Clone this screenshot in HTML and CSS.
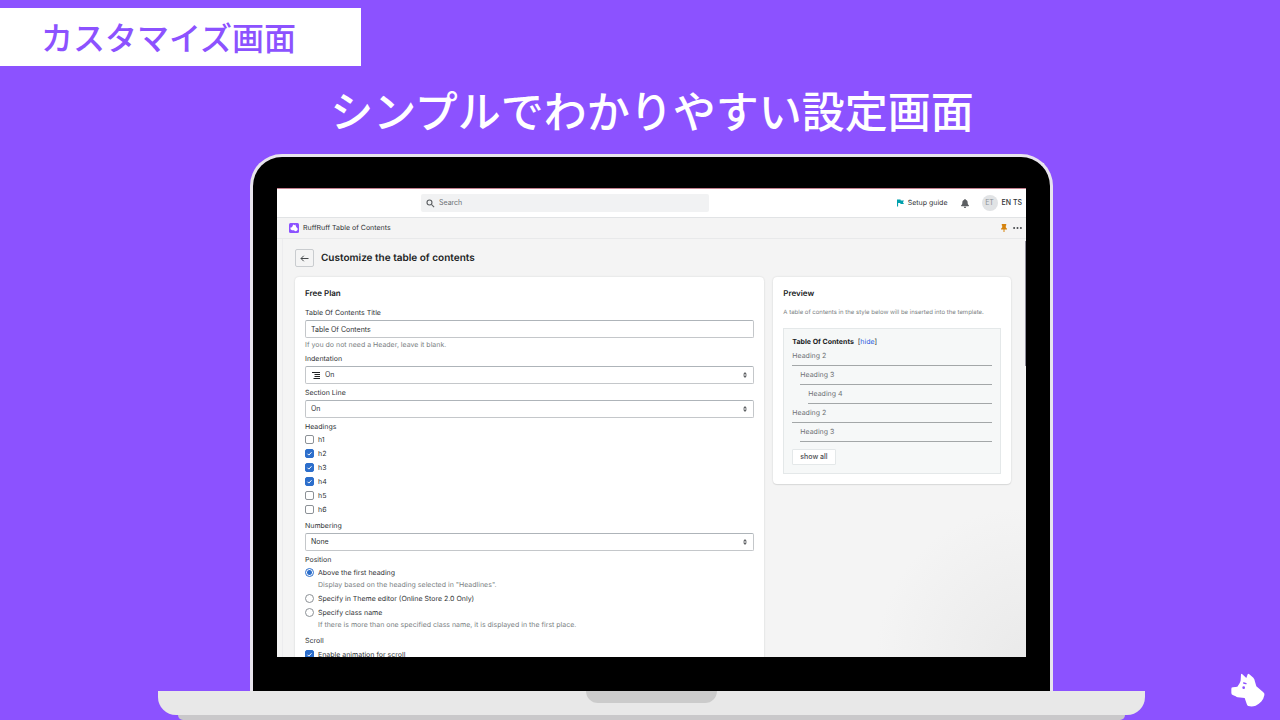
FILE: index.html
```html
<!DOCTYPE html>
<html lang="ja">
<head>
<meta charset="utf-8">
<title>カスタマイズ画面</title>
<link rel="stylesheet" href="styles.css">
</head>
<body>
<div class="page">
  <p class="tag">カスタマイズ画面</p>
  <h1 class="headline">シンプルでわかりやすい設定画面</h1>

  <div class="laptop">
    <div class="lid">
      <div class="screen" lang="en">
        <header class="topbar">
          <div class="search">
            <svg class="search-icon" viewBox="0 0 16 16" aria-hidden="true"><circle cx="6.2" cy="6.2" r="4.4"/><path d="M9.6 9.6l4.8 4.8"/></svg>
            <input class="search-input" type="search" placeholder="Search" aria-label="Search">
          </div>
          <div class="topbar-actions">
            <a class="setup" href="#"><svg class="flag" viewBox="0 0 16 16" aria-hidden="true"><path d="M0 0h8l.6 2H16l-2.500 4 2.500 4H8l-.6-2H2.500v8H0z"/></svg>Setup guide</a>
            <button class="icon-button" type="button" aria-label="Notifications"><svg class="bell" viewBox="0 0 16 18" aria-hidden="true"><path d="M8 0c1 0 1.500.8 1.500 1.700C12 2.500 13.300 4.600 13.300 7.200c0 3 .7 4.300 2.300 5.400.6.500.4 1.700-.6 1.700H1c-1 0-1.200-1.200-.6-1.700C2 11.500 2.700 10.200 2.700 7.200c0-2.600 1.300-4.700 3.800-5.500C6.500.8 7 0 8 0zM5.600 15.400h4.800C10.200 17 9.200 18 8 18s-2.200-1-2.400-2.600z"/></svg></button>
            <button class="account" type="button"><span class="avatar">ET</span>EN TS</button>
          </div>
        </header>

        <div class="appbar">
          <svg class="app-logo" viewBox="0 0 20 20" aria-hidden="true"><rect width="20" height="20" rx="3" fill="#8c52ff"/><path d="M8.500 3l2.500 1.700L12.500 3l2 5 3 3.500c0 3-2 5-5 5.200L9.800 14.500H6l-3-2V9l3-.7z" fill="#fff"/></svg>
          <span class="app-name">RuffRuff Table of Contents</span>
          <button class="icon-button" type="button" aria-label="Unpin"><svg class="pin" viewBox="0 0 12 16" aria-hidden="true"><path d="M1.500 0h9v2.500L9.600 3.500v3.500L12 9.500V11H7v5H5v-5H0V9.500L2.400 7V3.500l-.9-1z"/></svg></button>
          <button class="icon-button" type="button" aria-label="More"><svg class="dots" viewBox="0 0 18 4" aria-hidden="true"><circle cx="2.200" cy="2" r="2"/><circle cx="9" cy="2" r="2"/><circle cx="15.800" cy="2" r="2"/></svg></button>
        </div>

        <main class="content">
          <div class="page-header">
            <button class="back" type="button" aria-label="Back"><svg class="arrow" viewBox="0 0 18 14" aria-hidden="true"><path d="M17 7H2M7.500 1.500L2 7l5.500 5.500"/></svg></button>
            <h2 class="page-title">Customize the table of contents</h2>
          </div>

          <div class="columns">
            <form class="card settings">
              <h3 class="card-title">Free Plan</h3>

              <div class="field">
                <label class="label" for="toc-title">Table Of Contents Title</label>
                <div class="control"><input class="control-input" id="toc-title" type="text" value="Table Of Contents"></div>
                <p class="help">If you do not need a Header, leave it blank.</p>
              </div>

              <div class="field">
                <label class="label" for="indent">Indentation</label>
                <div class="control">
                  <svg class="indent-icon" viewBox="0 0 16 14" aria-hidden="true"><path d="M0 1h16M5 5h11M5 9h11M3 13h13"/></svg>
                  <select class="control-input" id="indent"><option>On</option><option>Off</option></select>
                  <svg class="updown" viewBox="0 0 8 12" aria-hidden="true"><path d="M4 0l4 5H0zM4 12L0 7h8z"/></svg>
                </div>
              </div>

              <div class="field">
                <label class="label" for="line">Section Line</label>
                <div class="control">
                  <select class="control-input" id="line"><option>On</option><option>Off</option></select>
                  <svg class="updown" viewBox="0 0 8 12" aria-hidden="true"><path d="M4 0l4 5H0zM4 12L0 7h8z"/></svg>
                </div>
              </div>

              <fieldset class="field">
                <legend class="label">Headings</legend>
                <div class="choices">
                  <label class="choice"><input class="tick" type="checkbox">h1</label>
                  <label class="choice"><input class="tick" type="checkbox" checked>h2</label>
                  <label class="choice"><input class="tick" type="checkbox" checked>h3</label>
                  <label class="choice"><input class="tick" type="checkbox" checked>h4</label>
                  <label class="choice"><input class="tick" type="checkbox">h5</label>
                  <label class="choice"><input class="tick" type="checkbox">h6</label>
                </div>
              </fieldset>

              <div class="field">
                <label class="label" for="numbering">Numbering</label>
                <div class="control">
                  <select class="control-input" id="numbering"><option>None</option><option>Decimal</option></select>
                  <svg class="updown" viewBox="0 0 8 12" aria-hidden="true"><path d="M4 0l4 5H0zM4 12L0 7h8z"/></svg>
                </div>
              </div>

              <fieldset class="field">
                <legend class="label">Position</legend>
                <div class="choices">
                  <label class="choice"><input class="dot" type="radio" name="position" checked>Above the first heading</label>
                  <p class="choice-help">Display based on the heading selected in "Headlines".</p>
                  <label class="choice"><input class="dot" type="radio" name="position">Specify in Theme editor (Online Store 2.0 Only)</label>
                  <label class="choice"><input class="dot" type="radio" name="position">Specify class name</label>
                  <p class="choice-help">If there is more than one specified class name, it is displayed in the first place.</p>
                </div>
              </fieldset>

              <fieldset class="field">
                <legend class="label">Scroll</legend>
                <div class="choices choices-loose">
                  <label class="choice"><input class="tick" type="checkbox" checked>Enable animation for scroll</label>
                </div>
              </fieldset>
            </form>

            <section class="card preview">
              <h3 class="card-title">Preview</h3>
              <p class="preview-note">A table of contents in the style below will be inserted into the template.</p>
              <nav class="toc">
                <p class="toc-title"><strong>Table Of Contents</strong> <span class="toc-toggle">[<a href="#">hide</a>]</span></p>
                <ul class="toc-list">
                  <li class="toc-item">Heading 2</li>
                  <li class="toc-item level-3">Heading 3</li>
                  <li class="toc-item level-4">Heading 4</li>
                  <li class="toc-item">Heading 2</li>
                  <li class="toc-item level-3">Heading 3</li>
                </ul>
                <button class="show-all" type="button">show all</button>
              </nav>
            </section>
          </div>
        </main>
      </div>
    </div>
    <div class="base"><div class="notch"></div></div>
    <div class="foot"></div>
  </div>

  <svg class="dog" viewBox="92 39 102 102" aria-hidden="true">
    <path fill="#fff" d="M122 43q2-3 4 0l12 11 4-11q2-3 5 0l12 10q4 4 5 12l4 14 21 18q5 4 3 9c-3 15-12 25-26 31-8 3-15 3-22 1q-4-2-5-7l-6-17-21-2q-3 0-6-3l-9-4q-4-2-4-7v-12q0-4 5-4l13-2 6-9q3-5 4-10z"/>
    <path d="M130 69l7 2" fill="none" stroke="#8c52ff" stroke-width="4" stroke-linecap="round"/>
    <circle cx="130" cy="83" r="4" fill="#8c52ff"/>
  </svg>
</div>
</body>
</html>
```

FILE: styles.css
```css
* { box-sizing: border-box; }

body, h1, h2, h3, p, ul, fieldset { margin: 0; padding: 0; }

button, input, select {
  margin: 0;
  padding: 0;
  border: 0;
  background: none;
  color: inherit;
  font: inherit;
}

svg { display: block; flex: none; }

.page {
  position: relative;
  display: flex;
  flex-direction: column;
  height: 100vh;
  padding-top: 8px;
  overflow: hidden;
  background: #8c52ff;
  font-family: "Noto Sans CJK JP", sans-serif;
}

.tag {
  align-self: flex-start;
  padding: 0 65px 2px 41px;
  background: #fff;
  color: #8c52ff;
  font-size: 32px;
  font-weight: 500;
  line-height: 56px;
}

.headline {
  padding: 11px 0 13px 24px;
  color: #fff;
  font-size: 43px;
  font-weight: 500;
  line-height: 64px;
  text-align: center;
}

/* Laptop frame */
.laptop {
  display: flex;
  flex: 1;
  flex-direction: column;
  min-height: 0;
  padding: 0 135px 0 158px;
}

.lid {
  display: flex;
  flex: 1;
  min-height: 0;
  margin: 0 92px;
  padding: 31px 24px 34px;
  border: 3px solid #e8e4ee;
  border-bottom: 0;
  border-radius: 32px 32px 0 0;
  background: #000;
}

.base {
  height: 24px;
  border-radius: 0 0 18px 18px;
  background: #e8e8e8;
}

.notch {
  width: 131px;
  height: 12px;
  margin: 0 auto;
  border-radius: 0 0 12px 12px;
  background: #cbcbcb;
}

.foot {
  height: 5px;
  margin: 0 20px;
  border-radius: 0 0 8px 8px;
  background: #c9c8ca;
}

.dog {
  position: absolute;
  right: 15px;
  bottom: 13px;
  width: 34px;
  height: 34px;
}

/* Application screen */
.screen {
  display: flex;
  flex: 1;
  flex-direction: column;
  min-width: 0;
  overflow: hidden;
  border-top: 1px solid #c4808f;
  background: #f4f4f4;
  color: #303335;
  font-family: Inter, sans-serif;
  font-size: 7px;
  line-height: 10px;
  text-rendering: geometricPrecision;
}

.topbar {
  display: grid;
  flex: none;
  grid-template-columns: 5fr 10fr 11fr;
  align-items: center;
  height: 29px;
  border-bottom: 1px solid #e1e3e5;
  background: #fff;
}

.search {
  display: flex;
  grid-column: 2;
  align-items: center;
  gap: 4px;
  height: 18px;
  padding: 0 5px;
  border-radius: 2px;
  background: #f1f2f3;
}

.search-icon {
  width: 9px;
  height: 9px;
  fill: none;
  stroke: #5c5f62;
  stroke-width: 2;
}

.search-input { flex: 1; min-width: 0; outline: 0; }
.search-input::placeholder { color: #6d7175; opacity: 1; }

.topbar-actions {
  display: flex;
  align-items: center;
  justify-content: flex-end;
  gap: 13px;
  padding-right: 4px;
}

.setup {
  display: flex;
  align-items: center;
  gap: 4px;
  color: inherit;
  text-decoration: none;
}

.flag { width: 7px; height: 8px; fill: #00a0ac; }
.bell { width: 8px; height: 9px; fill: #5c5f62; }

.account {
  display: flex;
  align-items: center;
  gap: 4px;
  font-weight: 500;
}

.avatar {
  width: 16px;
  border-radius: 50%;
  background: #e1e3e5;
  color: #8c9196;
  font-weight: 400;
  line-height: 16px;
  text-align: center;
}

.appbar {
  display: flex;
  flex: none;
  align-items: center;
  gap: 6px;
  height: 21px;
  padding: 0 4px 0 12px;
  border-bottom: 1px solid #e8e9ea;
}

.app-logo { width: 10px; height: 10px; }
.app-name { flex: 1; margin-left: -2px; }
.pin { width: 6px; height: 8px; fill: #d5830d; }
.dots { width: 9px; height: 2px; fill: #45484b; }

.content {
  position: relative;
  flex: 1;
  min-height: 0;
  margin-left: 5px;
  padding: 10px 15px 0 12px;
  overflow: hidden;
  border-left: 1px solid #ececee;
  background: radial-gradient(circle at 100% 100%, #eaeaea, #f4f4f4 150px);
}

.content::after {
  position: absolute;
  top: 2px;
  right: 0;
  width: 1px;
  height: 125px;
  background: #8f8c98;
  content: "";
}

.page-header {
  display: flex;
  align-items: center;
  gap: 7px;
  margin-bottom: 10px;
}

.back {
  display: grid;
  place-items: center;
  width: 19px;
  height: 18px;
  border: 1px solid #c9cccf;
  border-radius: 2px;
}

.arrow {
  width: 9px;
  height: 7px;
  fill: none;
  stroke: #45484b;
  stroke-width: 2;
}

.page-title {
  color: #202223;
  font-size: 10px;
  font-weight: 600;
  line-height: 18px;
}

.columns {
  display: grid;
  grid-template-columns: 470fr 238fr;
  align-items: start;
  gap: 9px;
}

.card {
  padding: 10px;
  border-radius: 4px;
  background: #fff;
  box-shadow: 0 0 2px #17181826, 0 1px 1px #17181814;
}

.card-title {
  color: #202223;
  font-size: 8px;
  font-weight: 600;
  line-height: 12px;
}

/* Settings form */
.settings { display: flex; flex-direction: column; gap: 4px; }
.settings .card-title { margin-bottom: 5px; }

.field { min-width: 0; border: 0; }
.label { display: block; padding: 0; line-height: 10px; }

.control {
  display: flex;
  align-items: center;
  height: 18px;
  margin-top: 2px;
  padding: 0 6px 0 5px;
  border: 1px solid #c4c7ca;
  border-top-color: #aeb4b9;
  border-radius: 2px;
}

.control-input {
  flex: 1;
  min-width: 0;
  height: 16px;
  outline: 0;
  appearance: none;
}

.updown { width: 4px; height: 6px; fill: #5c5f62; }

.indent-icon {
  width: 8px;
  height: 7px;
  margin: 0 5px 0 1px;
  stroke: #202223;
  stroke-width: 2;
}

.help { margin-top: 2px; color: #7b7f83; }

.choices { padding-top: 1px; }
.choices-loose { padding-top: 2px; }

.choice {
  display: flex;
  align-items: center;
  gap: 4px;
  height: 14px;
}

.choice-help {
  padding: 0 0 2px 13px;
  color: #7b7f83;
}

.tick, .dot {
  flex: none;
  width: 9px;
  height: 9px;
  margin-bottom: 1px;
  border: 1px solid #8c9196;
  border-radius: 2px;
  appearance: none;
}

.tick:checked {
  border-color: #2c6ecb;
  background: #2c6ecb url("data:image/svg+xml,%3Csvg xmlns='http://www.w3.org/2000/svg' viewBox='0 0 14 14'%3E%3Cpath d='M3 7.500l2.700 2.700L11 4.500' fill='none' stroke='white' stroke-width='2'/%3E%3C/svg%3E") center / 7px 7px no-repeat;
}

.dot { border-radius: 50%; }

.dot:checked {
  border-color: #2c6ecb;
  background: radial-gradient(circle, #2c6ecb 2px, #fff 3px);
}

/* Preview */
.preview-note {
  margin: 9px 0 10px;
  color: #7b7f83;
  font-size: 6px;
  line-height: 10px;
}

.toc {
  padding: 8px;
  border: 1px solid #e4e8e9;
  background: #f6f8f8;
}

.toc-title { line-height: 10px; }
.toc-title strong { color: #202223; font-weight: 700; }
.toc-toggle { margin-left: 2px; }
.toc-toggle a { color: #2c5fe0; text-decoration: none; }
.toc-list { list-style: none; color: #6d7175; }

.toc-item {
  border-bottom: 1px solid #a3a7a8;
  line-height: 18px;
}

.level-3 { margin-left: 8px; }
.level-4 { margin-left: 16px; }

.show-all {
  display: block;
  margin-top: 7px;
  padding: 0 7px;
  border: 1px solid #e4e8e9;
  border-radius: 1px;
  background: #fff;
  color: #4a4d50;
  font-weight: 500;
  line-height: 14px;
}
```
